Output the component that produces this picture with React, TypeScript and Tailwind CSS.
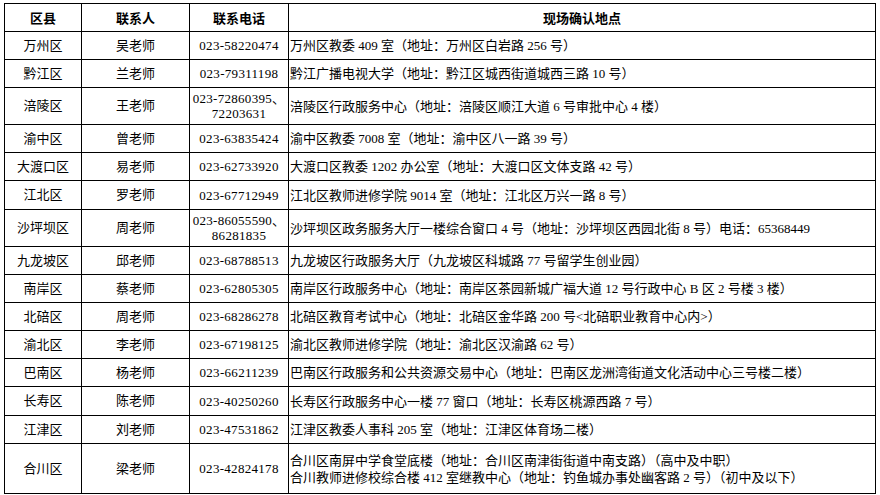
import React from 'react';

type Row = { area: string; person: string; phone: string[]; place: string[]; h: number };

const rows: Row[] = [
  { area: '万州区', person: '吴老师', phone: ['023-58220474'], place: ['万州区教委 409 室（地址：万州区白岩路 256 号）'], h: 28 },
  { area: '黔江区', person: '兰老师', phone: ['023-79311198'], place: ['黔江广播电视大学（地址：黔江区城西街道城西三路 10 号）'], h: 28 },
  { area: '涪陵区', person: '王老师', phone: ['023-72860395、', '72203631'], place: ['涪陵区行政服务中心（地址：涪陵区顺江大道 6 号审批中心 4 楼）'], h: 37 },
  { area: '渝中区', person: '曾老师', phone: ['023-63835424'], place: ['渝中区教委 7008 室（地址：渝中区八一路 39 号）'], h: 28 },
  { area: '大渡口区', person: '易老师', phone: ['023-62733920'], place: ['大渡口区教委 1202 办公室（地址：大渡口区文体支路 42 号）'], h: 28 },
  { area: '江北区', person: '罗老师', phone: ['023-67712949'], place: ['江北区教师进修学院 9014 室（地址：江北区万兴一路 8 号）'], h: 29 },
  { area: '沙坪坝区', person: '周老师', phone: ['023-86055590、', '86281835'], place: ['沙坪坝区政务服务大厅一楼综合窗口 4 号（地址：沙坪坝区西园北街 8 号）电话：65368449'], h: 37 },
  { area: '九龙坡区', person: '邱老师', phone: ['023-68788513'], place: ['九龙坡区行政服务大厅（九龙坡区科城路 77 号留学生创业园）'], h: 28 },
  { area: '南岸区', person: '蔡老师', phone: ['023-62805305'], place: ['南岸区行政服务中心（地址：南岸区茶园新城广福大道 12 号行政中心 B 区 2 号楼 3 楼）'], h: 28 },
  { area: '北碚区', person: '周老师', phone: ['023-68286278'], place: ['北碚区教育考试中心（地址：北碚区金华路 200 号<北碚职业教育中心内>）'], h: 28 },
  { area: '渝北区', person: '李老师', phone: ['023-67198125'], place: ['渝北区教师进修学院（地址：渝北区汉渝路 62 号）'], h: 28 },
  { area: '巴南区', person: '杨老师', phone: ['023-66211239'], place: ['巴南区行政服务和公共资源交易中心（地址：巴南区龙洲湾街道文化活动中心三号楼二楼）'], h: 28 },
  { area: '长寿区', person: '陈老师', phone: ['023-40250260'], place: ['长寿区行政服务中心一楼 77 窗口（地址：长寿区桃源西路 7 号）'], h: 29 },
  { area: '江津区', person: '刘老师', phone: ['023-47531862'], place: ['江津区教委人事科 205 室（地址：江津区体育场二楼）'], h: 28 },
  {
    area: '合川区',
    person: '梁老师',
    phone: ['023-42824178'],
    place: [
      '合川区南屏中学食堂底楼（地址：合川区南津街街道中南支路）（高中及中职）',
      '合川教师进修校综合楼 412 室继教中心（地址：钓鱼城办事处幽客路 2 号）（初中及以下）',
    ],
    h: 50,
  },
];

const cell = 'border border-black align-middle p-0';

export default function App() {
  return (
    <div className="w-[880px] h-[495px] bg-white pl-[4px] pt-[3px] font-['Liberation_Serif','Noto_Sans_CJK_SC',serif] text-[13px] text-black">
      <table className="w-[872px] table-fixed border-collapse">
        <colgroup>
          <col className="w-[77px]" />
          <col className="w-[108px]" />
          <col className="w-[99px]" />
          <col />
        </colgroup>
        <thead>
          <tr className="h-[28px] font-['Noto_Sans_CJK_SC',sans-serif] font-bold">
            <th className={cell}>区县</th>
            <th className={cell}>联系人</th>
            <th className={cell}>联系电话</th>
            <th className={cell}>现场确认地点</th>
          </tr>
        </thead>
        <tbody>
          {rows.map((r) => (
            <tr key={r.area} style={{ height: r.h }}>
              <td className={`${cell} text-center`}>{r.area}</td>
              <td className={`${cell} text-center`}>{r.person}</td>
              <td className={`${cell} text-center leading-[15px] tracking-[0.3px] whitespace-nowrap`}>
                {r.phone.map((p) => <div key={p}>{p}</div>)}
              </td>
              <td className={`${cell} pl-[1px] leading-[17px] whitespace-nowrap`}>
                {r.place.map((p) => <div key={p}>{p}</div>)}
              </td>
            </tr>
          ))}
        </tbody>
      </table>
    </div>
  );
}
